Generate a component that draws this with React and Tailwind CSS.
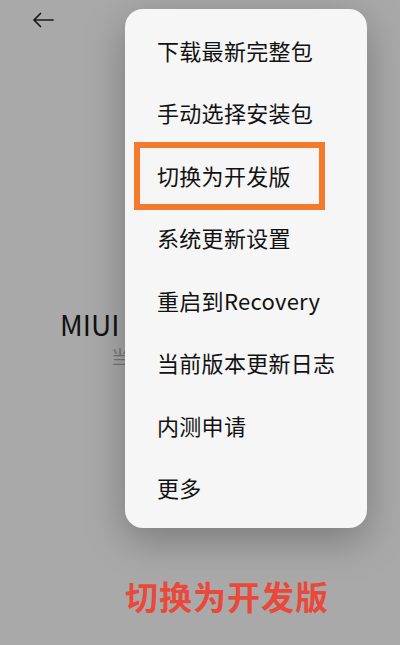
import React from "react";

const items = [
  "下载最新完整包",
  "手动选择安装包",
  "切换为开发版",
  "系统更新设置",
  "重启到Recovery",
  "当前版本更新日志",
  "内测申请",
  "更多",
];

const font = { fontFamily: '"Noto Sans CJK SC", "Noto Sans", sans-serif' };

function BackArrow() {
  return (
    <svg width="22" height="16" viewBox="0 0 22 16" fill="none">
      <path
        d="M21 8H2M8.5 1.5L2 8l6.5 6.5"
        stroke="#1a1a1a"
        strokeWidth="1.7"
        strokeLinecap="round"
        strokeLinejoin="round"
      />
    </svg>
  );
}

function Menu() {
  return (
    <div className="absolute left-[125px] top-[9px] w-[242px] rounded-[18px] bg-[#f6f6f6] pt-[10px] pb-[9px] shadow-[0_12px_40px_rgba(0,0,0,0.28)]">
      {items.map((label, i) => (
        <div key={label} className="relative flex h-[62.5px] items-center pl-[32px]">
          <span className="text-[22px] tracking-[0.3px] text-[#111]">{label}</span>
          {i === 2 && (
            <div className="absolute left-[9px] top-[-2px] h-[68px] w-[191px] border-[6px] border-[#f47a2c]" />
          )}
        </div>
      ))}
    </div>
  );
}

export default function App() {
  return (
    <div style={font} className="relative h-[645px] w-[400px] overflow-hidden bg-[#a9a9a9]">
      <div className="pl-[32px] pt-[12px]">
        <BackArrow />
      </div>
      <div className="pl-[60px] pt-[278px]">
        <div className="text-[28px] leading-[36px] text-[#111]">MIUI 12.5</div>
        <div className="pl-[51px] pt-[2px] text-[18px] leading-[24px] text-[#777]">当前版本</div>
      </div>
      <div className="pl-[125px] pt-[208px] text-[33px] font-bold leading-[40px] tracking-[1px] text-[#e8493a]">
        切换为开发版
      </div>
      <Menu />
    </div>
  );
}
